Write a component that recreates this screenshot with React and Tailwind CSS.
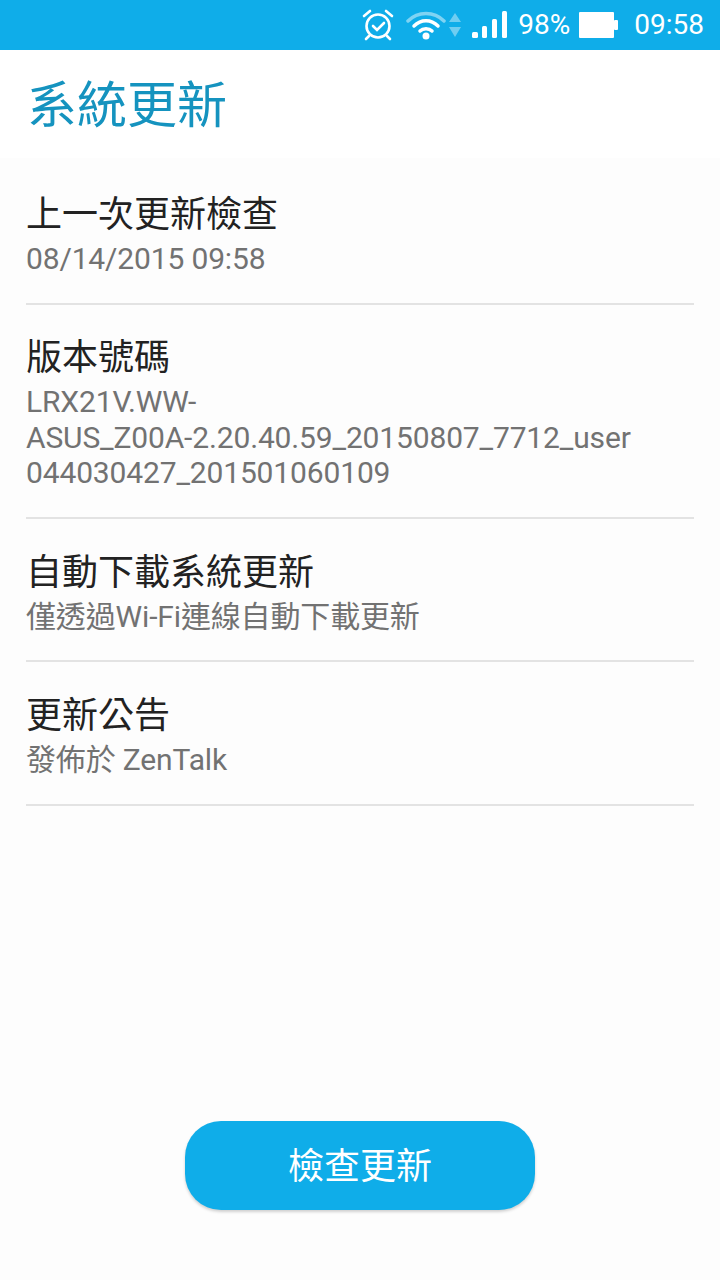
import React from "react";

const font = { fontFamily: 'Roboto, "Noto Sans CJK TC", sans-serif' };

const items = [
  { title: "上一次更新檢查", lines: ["08/14/2015 09:58"], h: "h-[147px]", pt: "pt-[31px]" },
  {
    title: "版本號碼",
    lines: ["LRX21V.WW-", "ASUS_Z00A-2.20.40.59_20150807_7712_user", "044030427_201501060109"],
    h: "h-[214px]",
    pt: "pt-[27px]",
  },
  { title: "自動下載系統更新", lines: ["僅透過Wi-Fi連線自動下載更新"], h: "h-[143px]", pt: "pt-[28px]" },
  { title: "更新公告", lines: ["發佈於 ZenTalk"], h: "h-[144px]", pt: "pt-[28px]" },
];

const StatusBar = () => (
  <div className="h-[50px] bg-[#0fade9] flex items-center justify-end text-white text-[28px] pr-[16px]">
    {/* alarm */}
    <svg width="34" height="34" viewBox="0 0 34 34" fill="none" stroke="white" strokeWidth="2.6" strokeLinecap="round" className="mr-[11px]">
      <circle cx="17" cy="18" r="11.5" />
      <path d="M12 18l4 4 7-7" />
      <path d="M3 8l6-5M31 8l-6-5M8 28l-3 3M26 28l3 3" />
    </svg>
    {/* wifi */}
    <svg width="40" height="30" viewBox="0 0 40 30" fill="none" strokeLinecap="round" className="mr-[2px]">
      <path d="M2 11C12 1 28 1 38 11" stroke="#7fd3f3" strokeWidth="3.5" />
      <path d="M8 16C15 9 25 9 32 16" stroke="white" strokeWidth="3.5" />
      <path d="M14 21C17 18 23 18 26 21" stroke="white" strokeWidth="3.5" />
      <circle cx="20" cy="26" r="3.5" fill="white" />
    </svg>
    <svg width="14" height="28" viewBox="0 0 14 28" fill="#6fcdf1" className="mr-[10px]">
      <path d="M7 2l6 9H1zM1 16h12l-6 10z" />
    </svg>
    {/* signal */}
    <svg width="35" height="30" viewBox="0 0 35 30" fill="white" className="mr-[11px]">
      <rect x="0" y="22" width="6" height="6" rx="1.5" />
      <rect x="10" y="16" width="5" height="12" rx="1.5" />
      <rect x="20" y="9" width="5" height="19" rx="1.5" />
      <rect x="30" y="1" width="5" height="27" rx="1.5" />
    </svg>
    <span className="mr-[9px]">98%</span>
    {/* battery */}
    <svg width="39" height="26" viewBox="0 0 39 26" fill="white" className="mr-[16px]">
      <rect x="0" y="0" width="35" height="26" rx="1" />
      <rect x="35" y="8" width="4" height="10" rx="1" />
    </svg>
    <span>09:58</span>
  </div>
);

export default function App() {
  return (
    <div className="w-[720px] h-[1280px] bg-[#fdfdfd] flex flex-col overflow-hidden" style={font}>
      <StatusBar />
      <div className="h-[108px] bg-white pl-[27px] pt-[22px] text-[50px] leading-[68px] text-[#1593bf]">系統更新</div>
      <div className="px-[26px]">
        {items.map((item) => (
          <div key={item.title} className={`${item.h} ${item.pt} border-b-2 border-[#e3e3e3]`}>
            <div className="text-[36px] leading-[52px] text-[#222222]">{item.title}</div>
            <div className="text-[30px] leading-[35.5px] text-[#727272] whitespace-nowrap tracking-[-0.15px]">
              {item.lines.map((l) => (
                <div key={l}>{l}</div>
              ))}
            </div>
          </div>
        ))}
      </div>
      <div className="flex-1 flex items-start justify-center pt-[315px]">
        <button className="w-[350px] h-[89px] rounded-[36px] bg-[#0fade9] text-white text-[36px] pt-[3px] shadow-[0_2px_3px_rgba(0,0,0,0.18)]">
          檢查更新
        </button>
      </div>
    </div>
  );
}
